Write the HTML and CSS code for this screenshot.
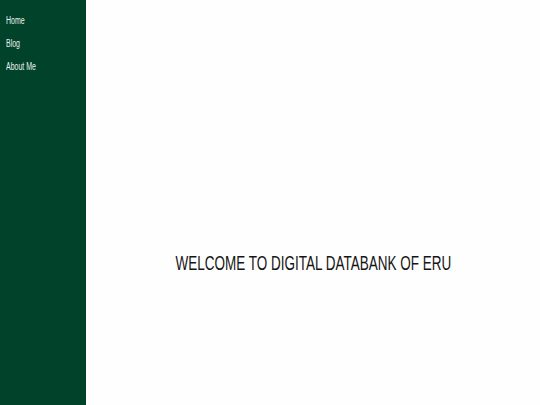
FILE: index.html
```html
<!DOCTYPE html>
<html>
<head>
<meta charset="utf-8">
<link rel="stylesheet" href="styles.css">
</head>
<body>
<div class="layout">
  <nav class="sidebar">
    <a class="nav-link" href="#">Home</a>
    <a class="nav-link" href="#">Blog</a>
    <a class="nav-link" href="#">About Me</a>
  </nav>
  <main class="main">
    <h1 class="title">WELCOME TO DIGITAL DATABANK OF ERU</h1>
  </main>
</div>
</body>
</html>
```
FILE: styles.css
```css
html, body {
  margin: 0;
  padding: 0;
  height: 100%;
  background: #fefefe;
}
body {
  font-family: "Liberation Sans", Arial, sans-serif;
}
.layout {
  display: flex;
  height: 405px;
}
.sidebar {
  width: 86px;
  flex: none;
  background: #01432a;
  display: flex;
  flex-direction: column;
  align-items: flex-start;
  padding-top: 15px;
  box-sizing: border-box;
}
.nav-link {
  color: #e8f0ec;
  text-decoration: none;
  font-size: 10px;
  line-height: 12px;
  height: 23px;
  margin-left: 6px;
  transform: scaleX(0.7);
  transform-origin: left top;
}
.main {
  flex: 1;
  display: flex;
  justify-content: center;
  padding-top: 253px;
  padding-left: 1px;
  box-sizing: border-box;
}
.title {
  margin: 0;
  font-weight: normal;
  font-size: 20px;
  line-height: 20px;
  color: #151515;
  height: 20px;
  white-space: nowrap;
  transform: scaleX(0.675);
}
```
